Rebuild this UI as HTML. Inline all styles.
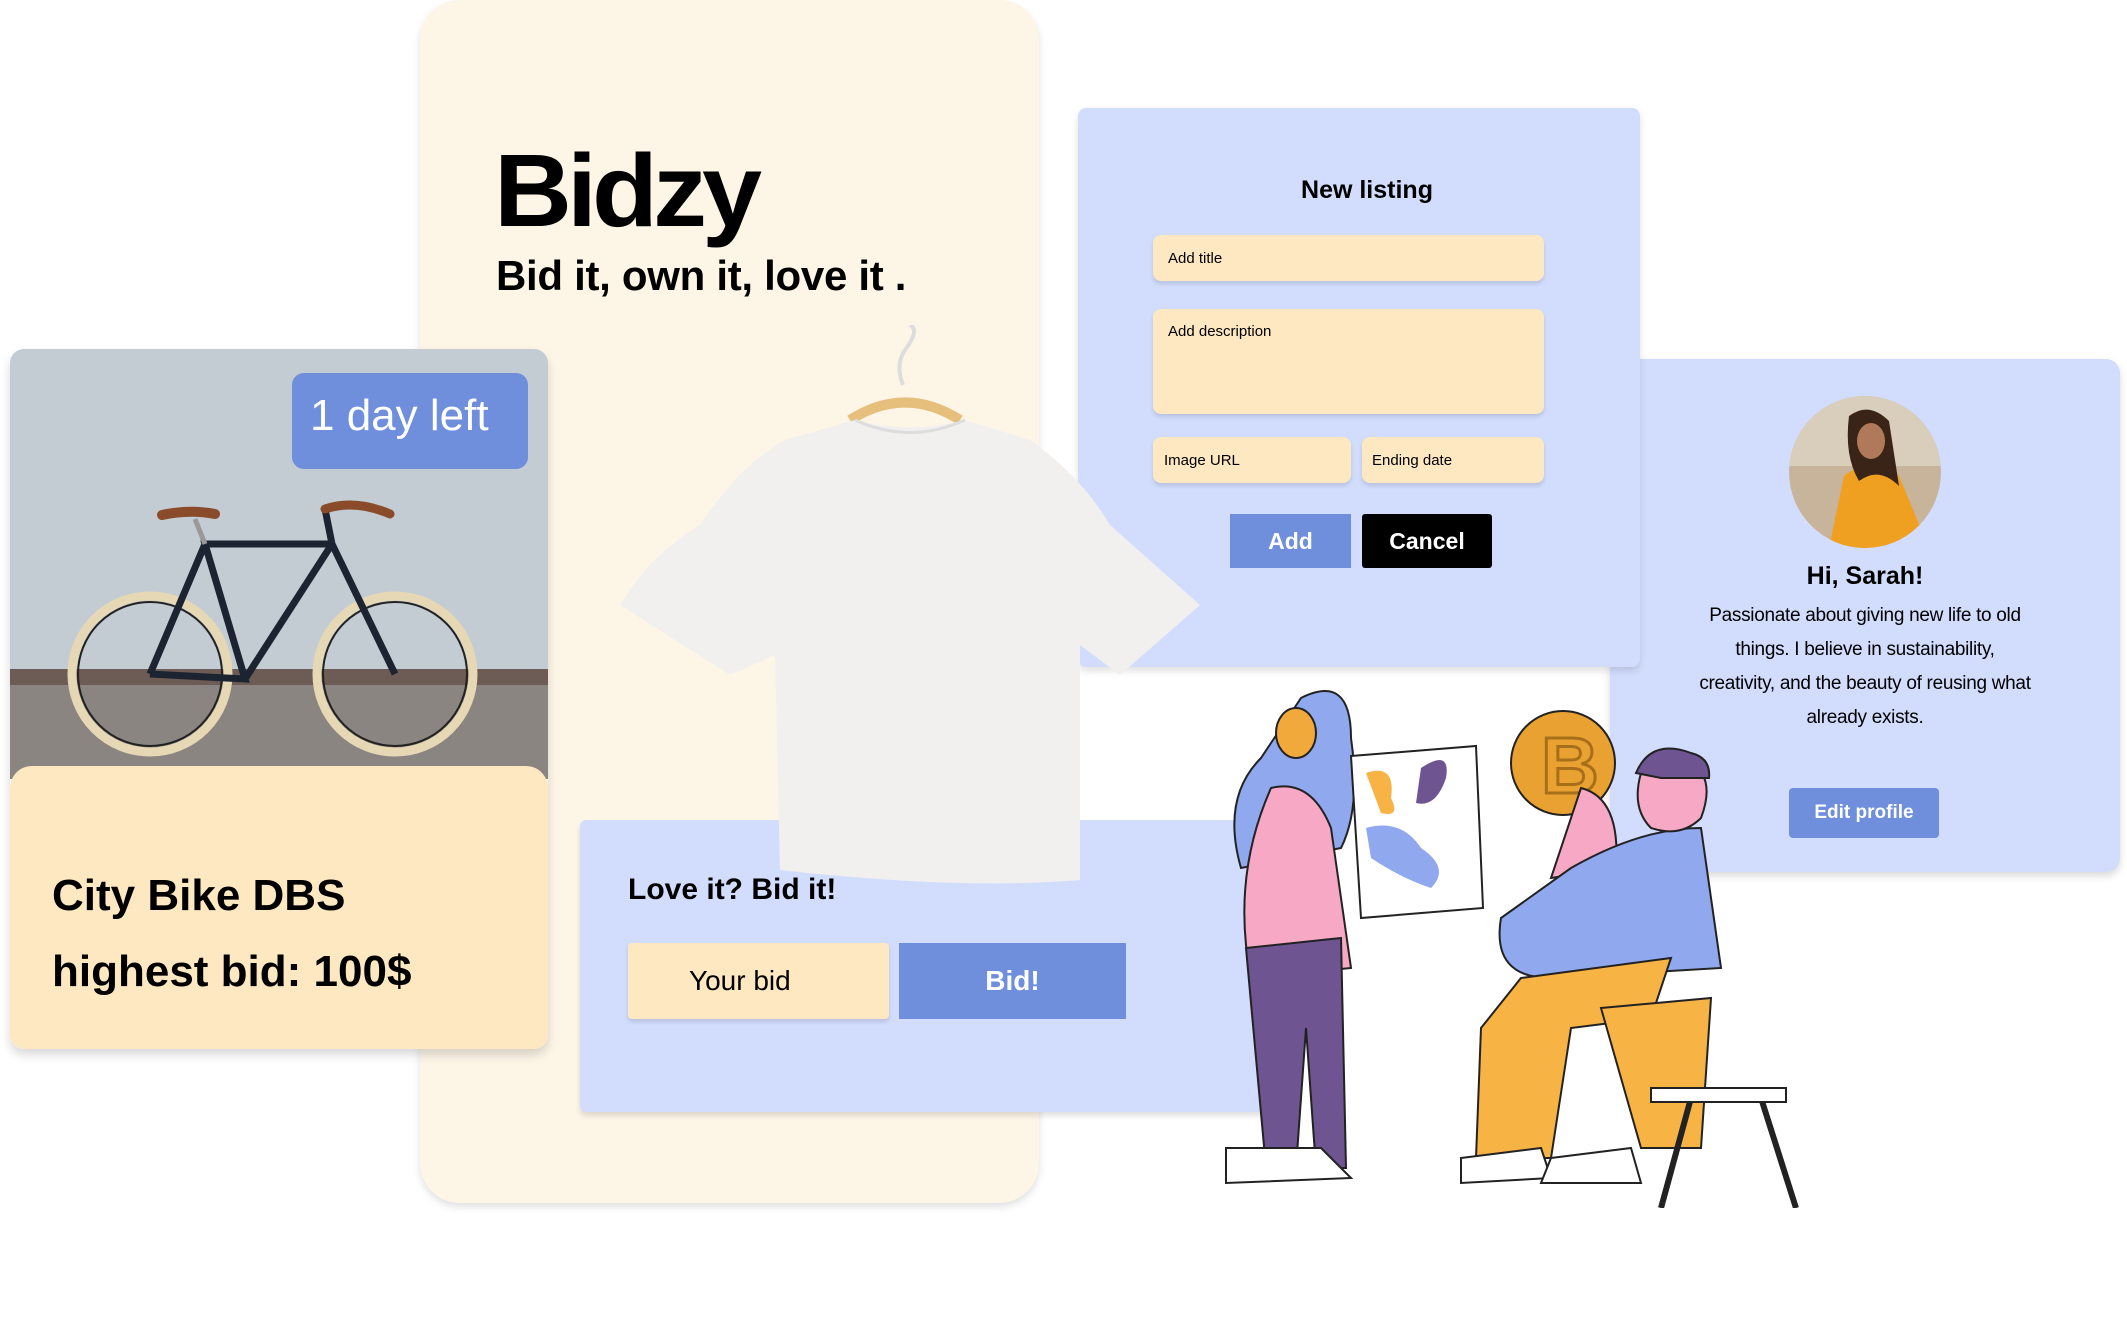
<!DOCTYPE html>
<html><head><meta charset="utf-8"><style>
*{margin:0;padding:0;box-sizing:border-box}
body{width:2127px;height:1328px;background:#fff;position:relative;overflow:hidden;font-family:"Liberation Sans",sans-serif;color:#000}
.a{position:absolute}
.beige{left:420px;top:0;width:619px;height:1203px;background:#fdf5e6;border-radius:40px;box-shadow:0 4px 8px rgba(0,0,0,.12)}
.inp{background:#fde8c2;border-radius:8px;box-shadow:0 3px 4px rgba(0,0,0,.12);font-size:15px;padding-left:15px;display:flex;align-items:center}
.btn{display:flex;align-items:center;justify-content:center;font-weight:bold;color:#fff}
</style></head><body>
<div class="a beige"></div>
<div class="a" style="left:494px;top:128px;font-size:108px;font-weight:900;letter-spacing:-5px;transform:scaleY(0.95)">Bidzy</div>
<div class="a" style="left:496px;top:252px;font-size:42px;font-weight:bold;letter-spacing:-0.3px">Bid it, own it, love it .</div>

<!-- profile card -->
<div class="a" style="left:1610px;top:359px;width:510px;height:513px;background:#d2ddfd;border-radius:14px;box-shadow:0 4px 8px rgba(0,0,0,.15)"></div>
<svg class="a" style="left:1789px;top:396px" width="152" height="152"><defs><clipPath id="c"><circle cx="76" cy="76" r="76"/></clipPath></defs><g clip-path="url(#c)"><rect width="152" height="152" fill="#c8b49a"/><rect x="0" y="0" width="152" height="70" fill="#d9cdbb"/><path d="M40 152 L55 80 Q80 60 110 80 L140 152Z" fill="#f0a020"/><path d="M60 20 Q80 5 100 25 L110 90 Q90 70 70 85 Q55 60 60 20Z" fill="#3a2418"/><ellipse cx="82" cy="45" rx="14" ry="18" fill="#b07a5a"/></g></svg>
<div class="a" style="left:1610px;top:562px;width:510px;text-align:center;font-size:25px;font-weight:bold">Hi, Sarah!</div>
<div class="a" style="left:1610px;top:599px;width:510px;text-align:center;font-size:19px;line-height:34px;letter-spacing:-0.3px">Passionate about giving new life to old<br>things. I believe in sustainability,<br>creativity, and the beauty of reusing what<br>already exists.</div>
<div class="a btn" style="left:1789px;top:788px;width:150px;height:50px;background:#6f8edb;border-radius:4px;font-size:19px">Edit profile</div>

<!-- new listing -->
<div class="a" style="left:1078px;top:108px;width:562px;height:559px;background:#d2ddfd;border-radius:8px;box-shadow:0 4px 8px rgba(0,0,0,.12)"></div>
<div class="a" style="left:1078px;top:176px;width:578px;text-align:center;font-size:25px;font-weight:bold">New listing</div>
<div class="a inp" style="left:1153px;top:235px;width:391px;height:46px">Add title</div>
<div class="a inp" style="left:1153px;top:309px;width:391px;height:105px;align-items:flex-start;padding-top:14px">Add description</div>
<div class="a inp" style="left:1153px;top:437px;width:198px;height:46px;padding-left:11px">Image URL</div>
<div class="a inp" style="left:1362px;top:437px;width:182px;height:46px;padding-left:10px">Ending date</div>
<div class="a btn" style="left:1230px;top:514px;width:121px;height:54px;background:#6f8edb;font-size:23px">Add</div>
<div class="a btn" style="left:1362px;top:514px;width:130px;height:54px;background:#000;border-radius:3px;font-size:23px">Cancel</div>

<!-- bid card -->
<div class="a" style="left:580px;top:820px;width:700px;height:292px;background:#d2ddfd;border-radius:6px;box-shadow:0 4px 6px rgba(0,0,0,.12)"></div>
<div class="a" style="left:628px;top:873px;font-size:30px;font-weight:bold">Love it? Bid it!</div>
<div class="a inp" style="left:628px;top:943px;width:261px;height:76px;font-size:28px;padding-left:61px;border-radius:4px">Your bid</div>
<div class="a btn" style="left:899px;top:943px;width:227px;height:76px;background:#6f8edb;font-size:28px">Bid!</div>

<!-- t-shirt -->
<svg class="a" style="left:610px;top:325px" width="600" height="560" viewBox="0 0 600 560">
<path d="M293 60 Q285 40 295 25 Q310 5 300 0" fill="none" stroke="#ddd" stroke-width="4"/>
<path d="M240 95 Q295 60 350 95" fill="none" stroke="#e7bf7c" stroke-width="10"/>
<path d="M245 95 Q300 110 355 95 L420 115 Q470 150 500 200 L590 280 L510 350 L470 320 L470 555 Q350 565 170 545 L165 330 L120 350 L10 280 Q40 230 90 200 Q130 140 175 115Z" fill="#f2f0ef"/>
<path d="M245 95 Q300 120 355 95" fill="none" stroke="#ddd" stroke-width="3"/>
</svg>

<!-- bike card -->
<div class="a" style="left:10px;top:349px;width:538px;height:700px;border-radius:14px;overflow:hidden;box-shadow:0 6px 10px rgba(0,0,0,.15)">
<svg class="a" style="left:0;top:0" width="538" height="430">
<rect width="538" height="430" fill="#c3cbd3"/>
<rect y="330" width="538" height="100" fill="#8a8580"/>
<rect y="320" width="538" height="16" fill="#6d5b55"/>
<g fill="none">
<circle cx="140" cy="325" r="78" stroke="#e6d8b5" stroke-width="9"/><circle cx="140" cy="325" r="72" stroke="#222" stroke-width="2"/>
<circle cx="385" cy="325" r="78" stroke="#e6d8b5" stroke-width="9"/><circle cx="385" cy="325" r="72" stroke="#222" stroke-width="2"/>
<path d="M140 325 L235 330 L195 195 L322 195 L385 325 M195 195 L140 325 M235 330 L322 195 L315 160" stroke="#1b2430" stroke-width="7"/>
<path d="M195 195 L185 170" stroke="#999" stroke-width="5"/>
<path d="M152 166 Q180 160 205 165" stroke="#8a4b2a" stroke-width="10" stroke-linecap="round"/>
<path d="M315 160 Q345 150 380 165" stroke="#8a4b2a" stroke-width="9" stroke-linecap="round"/>
</g></svg>
<div class="a" style="left:282px;top:24px;width:236px;height:96px;background:#6f8edb;border-radius:12px;color:#fff;font-size:44px;padding:18px 0 0 18px">1 day left</div>
<div class="a" style="left:0;top:417px;width:538px;height:283px;background:#fde8c2;border-radius:22px 22px 14px 14px"></div>
<div class="a" style="left:42px;top:509px;font-size:44px;font-weight:bold;line-height:76px">City Bike DBS<br>highest bid: 100$</div>
</div>

<!-- illustration -->
<svg class="a" style="left:1221px;top:678px" width="580" height="530" viewBox="0 0 580 530" stroke="#222" stroke-width="2">
<path d="M80 20 Q130 -5 130 60 Q140 130 120 170 L20 190 Q0 120 40 80Z" fill="#8fa8ee"/>
<path d="M50 110 Q90 100 110 150 L130 290 L30 300 Q10 200 50 110Z" fill="#f7a8c4"/>
<path d="M25 270 L120 260 L125 490 L95 490 L85 350 L75 490 L45 490Z" fill="#6e5490"/>
<path d="M5 470 L100 470 L130 500 L5 505Z" fill="#fff"/>
<ellipse cx="75" cy="55" rx="20" ry="25" fill="#f2a93b"/>
<path d="M130 78 L255 68 L262 230 L140 240Z" fill="#fff"/>
<path d="M145 95 Q175 85 170 120 Q180 140 160 135Z" fill="#f7b344" stroke="none"/>
<path d="M200 90 Q230 70 225 100 Q215 130 195 125Z" fill="#6e5490" stroke="none"/>
<path d="M145 150 Q180 140 200 170 Q230 190 210 210 Q180 200 150 180Z" fill="#8fa8ee" stroke="none"/>
<circle cx="342" cy="85" r="52" fill="#e9a232"/>
<text x="320" y="115" font-size="80" font-family="Liberation Sans" font-weight="bold" fill="none" stroke="#a86f1b" stroke-width="3">B</text>
<path d="M360 110 Q400 120 395 190 L330 200Z" fill="#f7a8c4"/>
<path d="M350 190 Q420 150 480 150 L500 290 L330 300 Q270 300 280 240Z" fill="#8fa8ee"/>
<path d="M300 300 L450 280 L430 340 L350 350 L330 480 L255 480 L260 350Z" fill="#f7b344"/>
<path d="M380 330 L490 320 L480 470 L420 470Z" fill="#f7b344"/>
<path d="M420 95 Q430 70 470 85 Q495 100 480 140 Q460 160 430 150 Q410 130 420 95Z" fill="#f7a8c4"/>
<path d="M415 95 Q430 60 470 75 Q490 80 488 100 L440 100Z" fill="#6e5490"/>
<path d="M440 420 L488 420 M470 420 L440 530 M540 420 L575 530" stroke="#222" stroke-width="6" fill="none"/>
<rect x="430" y="410" width="135" height="14" fill="#fff"/>
<path d="M240 480 L320 470 L330 500 L240 505Z" fill="#fff"/>
<path d="M330 480 L410 470 L420 505 L320 505Z" fill="#fff"/>
</svg>
</body></html>
